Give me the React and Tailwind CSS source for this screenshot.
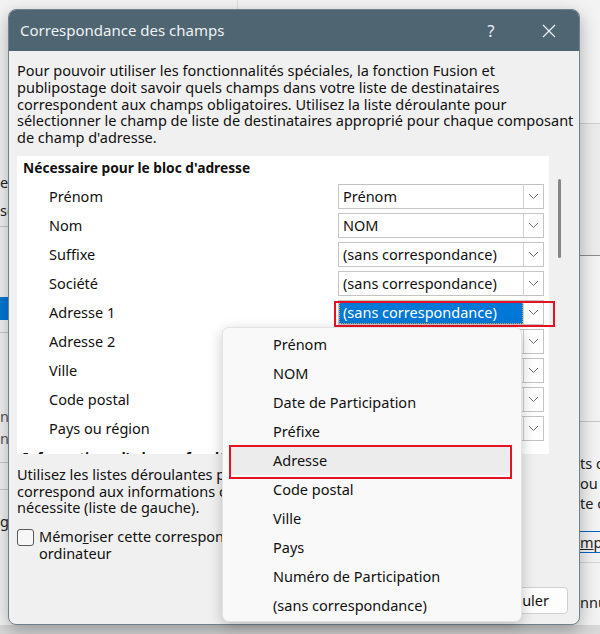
import React from "react";

const fields = [
  { label: "Prénom", value: "Prénom" },
  { label: "Nom", value: "NOM" },
  { label: "Suffixe", value: "(sans correspondance)" },
  { label: "Société", value: "(sans correspondance)" },
  { label: "Adresse 1", value: "(sans correspondance)", active: true },
  { label: "Adresse 2", value: "(sans correspondance)" },
  { label: "Ville", value: "(sans correspondance)" },
  { label: "Code postal", value: "(sans correspondance)" },
  { label: "Pays ou région", value: "(sans correspondance)" },
];

const options = [
  "Prénom",
  "NOM",
  "Date de Participation",
  "Préfixe",
  "Adresse",
  "Code postal",
  "Ville",
  "Pays",
  "Numéro de Participation",
  "(sans correspondance)",
];

const Chevron = () => (
  <svg width="11" height="7" viewBox="0 0 11 7" fill="none">
    <path d="M1 1l4.5 4.5L10 1" stroke="#707070" strokeWidth="1" />
  </svg>
);

const Select = ({ value, active }) => (
  <div className="flex h-[25px] w-[206px] border border-[#c4c4c4] bg-white">
    <div
      className={
        active
          ? "flex flex-1 items-center border border-dotted border-[#d9a35a] bg-[#0078d7] pl-[3px] text-white"
          : "flex flex-1 items-center pl-[4px]"
      }
    >
      {value}
    </div>
    <div className="flex w-[20px] items-center justify-center border-l border-[#d0d0d0] bg-white">
      <Chevron />
    </div>
  </div>
);

// the other windows peeking out behind the dialog
const Backdrop = () => (
  <div className="flex h-full flex-col">
    <div className="flex h-[625px]">
      <div className="flex w-[8px] flex-col overflow-hidden whitespace-nowrap text-[#222]">
        <div className="h-[168px] shrink-0" />
        <div className="h-[28px] shrink-0 leading-[28px]">e</div>
        <div className="h-[28px] shrink-0 leading-[28px]">sc</div>
        <div className="mt-[2px] h-px shrink-0 bg-[#c8c8c8]" />
        <div className="mt-[70px] h-[23px] shrink-0 bg-[#0078d4]" />
        <div className="mt-[12px] h-px shrink-0 bg-[#c8c8c8]" />
        <div className="mt-[72px] h-[22px] shrink-0 leading-[22px] text-[#555]">n</div>
        <div className="h-[22px] shrink-0 leading-[22px] text-[#555]">ns</div>
        <div className="mt-[13px] h-px shrink-0 bg-[#c8c8c8]" />
        <div className="mt-[26px] h-px shrink-0 bg-[#c8c8c8]" />
        <div className="mt-[20px] h-[22px] shrink-0 leading-[22px]">gi</div>
      </div>
      <div className="w-[229px]" />
      <div className="flex-1 border-l border-[#dcdcdc]" />
      <div className="flex w-[20px] flex-col overflow-hidden whitespace-nowrap text-[#222]">
        <div className="mt-[123px] h-px shrink-0 bg-[#cfcfcf]" />
        <div className="h-[131px] shrink-0 bg-[#ececec]" />
        <div className="h-px shrink-0 bg-[#8c8c8c]" />
        <div className="mt-[165px] h-px shrink-0 bg-[#c8c8c8]" />
        <div className="mt-[31px] leading-[20px]">
          <div>ts d</div>
          <div>ou</div>
          <div>te c</div>
        </div>
        <div className="mt-[18px] h-[22px] shrink-0 border-y border-[#0067c0] leading-[20px]">
          <u>m</u>p
        </div>
        <div className="mt-[9px] h-px shrink-0 bg-[#d4d4d4]" />
        <div className="mt-[27px] h-[24px] shrink-0 leading-[24px]">nnu</div>
      </div>
    </div>
    <div className="flex-1 bg-[#d8d8d8]" />
  </div>
);

export default function App() {
  return (
    <div className="relative h-[634px] w-[600px] overflow-hidden bg-[#f3f3f3] font-['Noto_Sans',sans-serif] text-[14.5px] text-[#111]">
      <Backdrop />

      {/* dialog window */}
      <div className="absolute left-[8px] top-[9px] flex h-[616px] w-[572px] flex-col overflow-hidden rounded-[8px] border border-[#6f818c] bg-[#f0f0f0] shadow-[0_6px_18px_rgba(0,0,0,0.3)]">
        <div className="flex h-[41px] shrink-0 items-center bg-[#4f6572] pl-[11px] text-[15px] text-[#eef2f4]">
          <span className="flex-1">Correspondance des champs</span>
          <span className="w-[20px] text-center text-[16px]">?</span>
          <span className="ml-[40px] mr-[22px] flex w-[16px] justify-center">
            <svg width="14" height="14" viewBox="0 0 14 14">
              <path d="M1 1l12 12M13 1L1 13" stroke="#eef2f4" strokeWidth="1.2" />
            </svg>
          </span>
        </div>

        <div className="flex flex-1 flex-col px-[8px] pt-[11px] leading-[16.75px]">
          <p className="whitespace-nowrap">
            Pour pouvoir utiliser les fonctionnalités spéciales, la fonction Fusion et
            <br />
            publipostage doit savoir quels champs dans votre liste de destinataires
            <br />
            correspondent aux champs obligatoires. Utilisez la liste déroulante pour
            <br />
            sélectionner le champ de liste de destinataires approprié pour chaque composant
            <br />
            de champ d'adresse.
          </p>

          <div className="mt-[10px] flex h-[298px] shrink-0">
            <div className="w-[534px] overflow-hidden bg-white">
              <div className="flex h-[26px] items-center pl-[6px] text-[13.75px] font-bold">
                Nécessaire pour le bloc d'adresse
              </div>
              {fields.map((f) => (
                <div key={f.label} className="flex h-[29px] items-center pl-[32px]">
                  <span className="w-[289px]">{f.label}</span>
                  <Select value={f.value} active={f.active} />
                </div>
              ))}
              <div className="flex h-[26px] items-center pl-[6px] pt-[6px] text-[13.75px] font-bold">
                Informations d'adresse facultatives
              </div>
            </div>
            <div className="w-[22px]">
              <div className="ml-[9px] mt-[23px] h-[79px] w-[3px] rounded-full bg-[#858585]" />
            </div>
          </div>

          <p className="mt-[12px] whitespace-nowrap">
            Utilisez les listes déroulantes pour choisir le champ de vos données qui
            <br />
            correspond aux informations concernant l'adresse que le publipostage
            <br />
            nécessite (liste de gauche).
          </p>

          <label className="mt-[12px] flex items-start gap-[5px]">
            <span className="mt-[1px] h-[17px] w-[17px] shrink-0 rounded-[3px] border border-[#5a5a5a] bg-[#f7f7f7]" />
            <span className="whitespace-nowrap">
              Mémo<u>r</u>iser cette correspondance pour ces données sur cet
              <br />
              ordinateur
            </span>
          </label>

          <div className="mt-auto flex justify-end gap-[8px] pb-[10px] pr-[3px]">
            <button className="h-[27px] w-[92px] rounded-[4px] border border-[#d0d0d0] bg-[#fdfdfd]">
              OK
            </button>
            <button className="h-[27px] w-[92px] rounded-[4px] border border-[#d0d0d0] bg-[#fdfdfd]">
              Annuler
            </button>
          </div>
        </div>
      </div>

      {/* red mark around the active select */}
      <div className="absolute left-[334px] top-[301px] h-[26px] w-[221px] border-2 border-[#e81123]" />

      {/* open dropdown list */}
      <div className="absolute left-[222px] top-[327px] flex h-[295px] w-[300px] flex-col rounded-[7px] border border-[#e3e3e3] bg-[#f9f9f9] pb-[12px] pl-[8px] pr-[12px] pt-[2px] shadow-[0_4px_14px_rgba(0,0,0,0.22)]">
        {options.map((o) => (
          <div
            key={o}
            className={
              o === "Adresse"
                ? "flex h-[29px] shrink-0 items-center rounded-[4px] bg-[#ececec] pl-[42px]"
                : "flex h-[29px] shrink-0 items-center pl-[42px]"
            }
          >
            {o}
          </div>
        ))}
      </div>
      <div className="absolute left-[229px] top-[445px] h-[34px] w-[283px] border-2 border-[#e81123]" />
    </div>
  );
}
